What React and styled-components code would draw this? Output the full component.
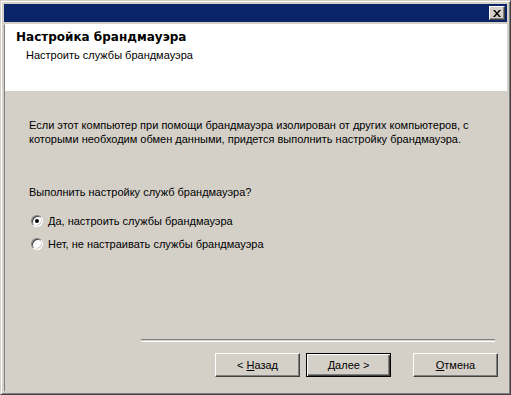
import React from 'react';
import styled, { createGlobalStyle } from 'styled-components';

const Global = createGlobalStyle`
  html, body {
    margin: 0;
    padding: 0;
    background: #d4d0c8;
  }
  body {
    font-family: "Liberation Sans", Arial, sans-serif;
    font-size: 11px;
    color: #000;
  }
`;

const Window = styled.div`
  box-sizing: border-box;
  width: 511px;
  height: 395px;
  display: flex;
  flex-direction: column;
  background: #d4d0c8;
  border-top: 1px solid #d4d0c8;
  border-left: 1px solid #d4d0c8;
  border-right: 1px solid #404040;
  border-bottom: 1px solid #404040;
  box-shadow: inset 1px 1px 0 #fff, inset -1px -1px 0 #808080;
  padding: 3px;
`;

const TitleBar = styled.div`
  height: 18px;
  flex: none;
  background: #0a246a;
  display: flex;
  align-items: center;
  justify-content: flex-end;
  padding-right: 2px;
`;

const CloseButton = styled.div`
  box-sizing: border-box;
  width: 16px;
  height: 14px;
  background: #d4d0c8;
  border-top: 1px solid #fff;
  border-left: 1px solid #fff;
  border-right: 1px solid #404040;
  border-bottom: 1px solid #404040;
  box-shadow: inset -1px -1px 0 #808080;
  display: flex;
  align-items: center;
  justify-content: center;
`;

const Client = styled.div`
  flex: 1;
  display: flex;
  flex-direction: column;
  margin-top: 2px;
  border-left: 1px solid #808080;
  border-top: 1px solid #fff;
`;

const Header = styled.div`
  height: 66px;
  flex: none;
  background: #fff;
  padding: 6px 0 0 11px;
  box-sizing: border-box;
`;

const Title = styled.div`
  font-family: "DejaVu Sans", Verdana, sans-serif;
  font-weight: bold;
  font-size: 12px;
  line-height: 13px;
`;

const Subtitle = styled.div`
  line-height: 13px;
  margin-top: 5px;
  padding-left: 10px;
`;

const Body = styled.div`
  flex: 1;
  display: flex;
  flex-direction: column;
  padding: 27px 0 0 24px;
`;

const Paragraph = styled.p`
  margin: 0;
  line-height: 14px;
  width: 460px;
`;

const Question = styled.p`
  margin: 39px 0 0 0;
  line-height: 14px;
`;

const Options = styled.div`
  display: flex;
  flex-direction: column;
  gap: 9px;
  margin-top: 15px;
  padding-left: 2px;
`;

const Option = styled.label`
  display: flex;
  align-items: center;
  gap: 5px;
  height: 14px;
`;

const Radio = styled.span`
  box-sizing: border-box;
  width: 12px;
  height: 12px;
  border-radius: 50%;
  background: #fff;
  border: 1px solid;
  border-color: #808080 #fff #fff #808080;
  box-shadow: inset 1px 1px 0 #404040, inset -1px -1px 0 #d4d0c8;
  display: flex;
  align-items: center;
  justify-content: center;
  &::after {
    content: '';
    width: 4px;
    height: 4px;
    border-radius: 50%;
    background: ${p => (p.$checked ? '#000' : 'transparent')};
  }
`;

const Footer = styled.div`
  margin-top: auto;
  padding-bottom: 14px;
`;

const Separator = styled.div`
  margin-left: 136px;
  margin-right: 12px;
  height: 1px;
  border-top: 1px solid #808080;
  border-bottom: 1px solid #fff;
`;

const Buttons = styled.div`
  display: flex;
  justify-content: flex-end;
  padding: 11px 9px 0 0;
`;

const Button = styled.div`
  box-sizing: border-box;
  width: 85px;
  height: 24px;
  margin-left: ${p => p.$gap}px;
  display: flex;
  align-items: center;
  justify-content: center;
  white-space: pre;
  background: #d4d0c8;
  border: 1px solid;
  border-color: ${p => (p.$default ? '#000' : '#fff #404040 #404040 #fff')};
  box-shadow: ${p =>
    p.$default
      ? 'inset 1px 1px 0 #fff, inset -1px -1px 0 #404040, inset -2px -2px 0 #808080'
      : 'inset -1px -1px 0 #808080'};
  u {
    text-decoration: underline;
  }
`;

const App = () => (
  <>
    <Global />
    <Window>
      <TitleBar>
        <CloseButton>
          <svg width="8" height="7" viewBox="0 0 8 7">
            <path d="M0 0h2l2 2.5L6 0h2L5 3.5 8 7H6L4 4.5 2 7H0l3-3.5z" fill="#000" />
          </svg>
        </CloseButton>
      </TitleBar>
      <Client>
        <Header>
          <Title>Настройка брандмауэра</Title>
          <Subtitle>Настроить службы брандмауэра</Subtitle>
        </Header>
        <Body>
          <Paragraph>
            Если этот компьютер при помощи брандмауэра изолирован от других компьютеров, с
            которыми необходим обмен данными, придется выполнить настройку брандмауэра.
          </Paragraph>
          <Question>Выполнить настройку служб брандмауэра?</Question>
          <Options>
            <Option>
              <Radio $checked />
              Да, настроить службы брандмауэра
            </Option>
            <Option>
              <Radio />
              Нет, не настраивать службы брандмауэра
            </Option>
          </Options>
        </Body>
        <Footer>
          <Separator />
          <Buttons>
            <Button $gap={0}><span>{'< '}<u>Н</u>азад</span></Button>
            <Button $gap={6} $default><span><u>Д</u>{'алее >'}</span></Button>
            <Button $gap={22}><span><u>О</u>тмена</span></Button>
          </Buttons>
        </Footer>
      </Client>
    </Window>
  </>
);

export default App;
